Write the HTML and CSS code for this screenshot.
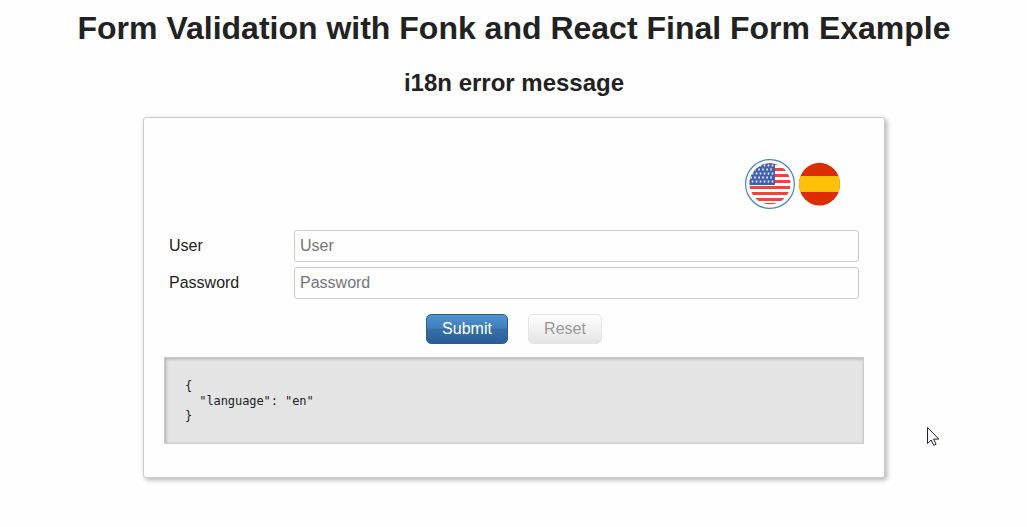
FILE: index.html
```html
<!DOCTYPE html>
<html lang="en">
<head>
<meta charset="utf-8">
<title>Form Validation with Fonk and React Final Form</title>
<link rel="stylesheet" href="styles.css">
</head>
<body>
<h1 class="title">Form Validation with Fonk and React Final Form Example</h1>
<h2 class="subtitle">i18n error message</h2>
<form class="form">
  <div class="languages">
    <svg class="flag" width="50" height="50" viewBox="0 0 50 50">
      <defs>
        <clipPath id="us"><circle cx="25" cy="24.7" r="20.5"/></clipPath>
        <pattern id="stars" x="5" y="4.5" width="4" height="8" patternUnits="userSpaceOnUse">
          <circle cx="2.5" cy="2" r="1" fill="#fff"/><circle cx="1" cy="6" r="1" fill="#fff"/>
        </pattern>
      </defs>
      <circle cx="25" cy="25" r="24.4" fill="#fff" stroke="#3b87c8" stroke-width="1.2"/>
      <g clip-path="url(#us)">
        <path d="M4 4.5h42M4 10.5h42M4 16.5h42M4 22.5h42M4 28.5h42M4 34.5h42M4 40.5h42M4 45.5h42" stroke="#f44336" stroke-width="3"/>
        <path d="M4 4h26v22H4z" fill="#405eb2"/><path d="M4 4.5h25v20H4z" fill="url(#stars)"/>
      </g>
    </svg>
    <svg class="flag" width="50" height="50" viewBox="0 0 50 50">
      <defs><clipPath id="es"><ellipse cx="20.5" cy="25.2" rx="20.5" ry="21.4"/></clipPath></defs>
      <g clip-path="url(#es)"><path d="M0 3h42v44H0z" fill="#dc2d00"/><path d="M0 17h42v16H0z" fill="#ffc107"/></g>
    </svg>
  </div>
  <div class="field"><label class="label" for="user">User</label><input class="input" id="user" placeholder="User"></div>
  <div class="field"><label class="label" for="password">Password</label><input class="input" id="password" type="password" placeholder="Password"></div>
  <div class="buttons"><button class="button primary" type="button">Submit</button><button class="button" type="button" disabled>Reset</button></div>
  <pre class="values">{
  "language": "en"
}</pre>
</form>
<svg class="cursor" width="13" height="20" viewBox="0 0 13 20"><path d="M.5.5v16l3.7-3.5 2.5 5.3 2.4-1.1-2.5-5.1h5.2z" fill="#fff" stroke="#222233"/></svg>
</body>
</html>
```
FILE: styles.css
```css
* { box-sizing: border-box; }
body { margin: 0; height: 527px; overflow: hidden; background: #fefefe; color: #222; font-family: "Liberation Sans", Arial, sans-serif; font-size: 16px; }
.title { margin: 10px 0 0; padding-left: 1px; text-align: center; font-size: 32px; line-height: 37px; white-space: nowrap; }
.subtitle { margin: 22px 0 0; padding-left: 1px; text-align: center; font-size: 24px; line-height: 28px; }
.form { width: 742px; height: 361px; margin: 20px 0 0 143px; padding: 41px 20px 0; border: 1px solid #ccc; border-radius: 3px; background: #fefefe; box-shadow: 2px 2px 5px rgba(0, 0, 0, .3); }
.languages { display: flex; gap: 4px; height: 50px; padding-left: 581px; }
.flag { flex: none; }
.field { display: flex; height: 32px; margin: 0 5px 5px; line-height: 32px; }
.languages + .field { margin-top: 21px; }
.label { width: 125px; line-height: 31px; }
.input { flex: 1; min-width: 0; padding: 0 5px; border: 1px solid #ccc; border-radius: 3px; background: #fefefe; font: inherit; line-height: 30px; }
.input::placeholder { color: #757575; }
.buttons { display: flex; justify-content: center; gap: 20px; margin-top: 15px; }
.button { width: 74px; height: 30px; padding: 0 0 1px; border: 1px solid #ccc; border-radius: 5px; background: linear-gradient(#fff, #ccc); color: #333; font: inherit; opacity: .5; }
.primary { width: 82px; border-color: #285f9b; background: linear-gradient(#4f93ce, #3f7fbd 46%, #376fa9 50%, #285f97); color: #fff; opacity: 1; }
.values { width: 700px; height: 87px; margin: 13px 0 0; padding: 21px 20px 20px; border: 1px solid #ccc; background: #e4e4e4; box-shadow: inset 1px 1px 3px rgba(0, 0, 0, .25); font: 12px/15px "DejaVu Sans Mono", monospace; letter-spacing: -.08px; }
.cursor { position: absolute; left: 927px; top: 427px; }
```
